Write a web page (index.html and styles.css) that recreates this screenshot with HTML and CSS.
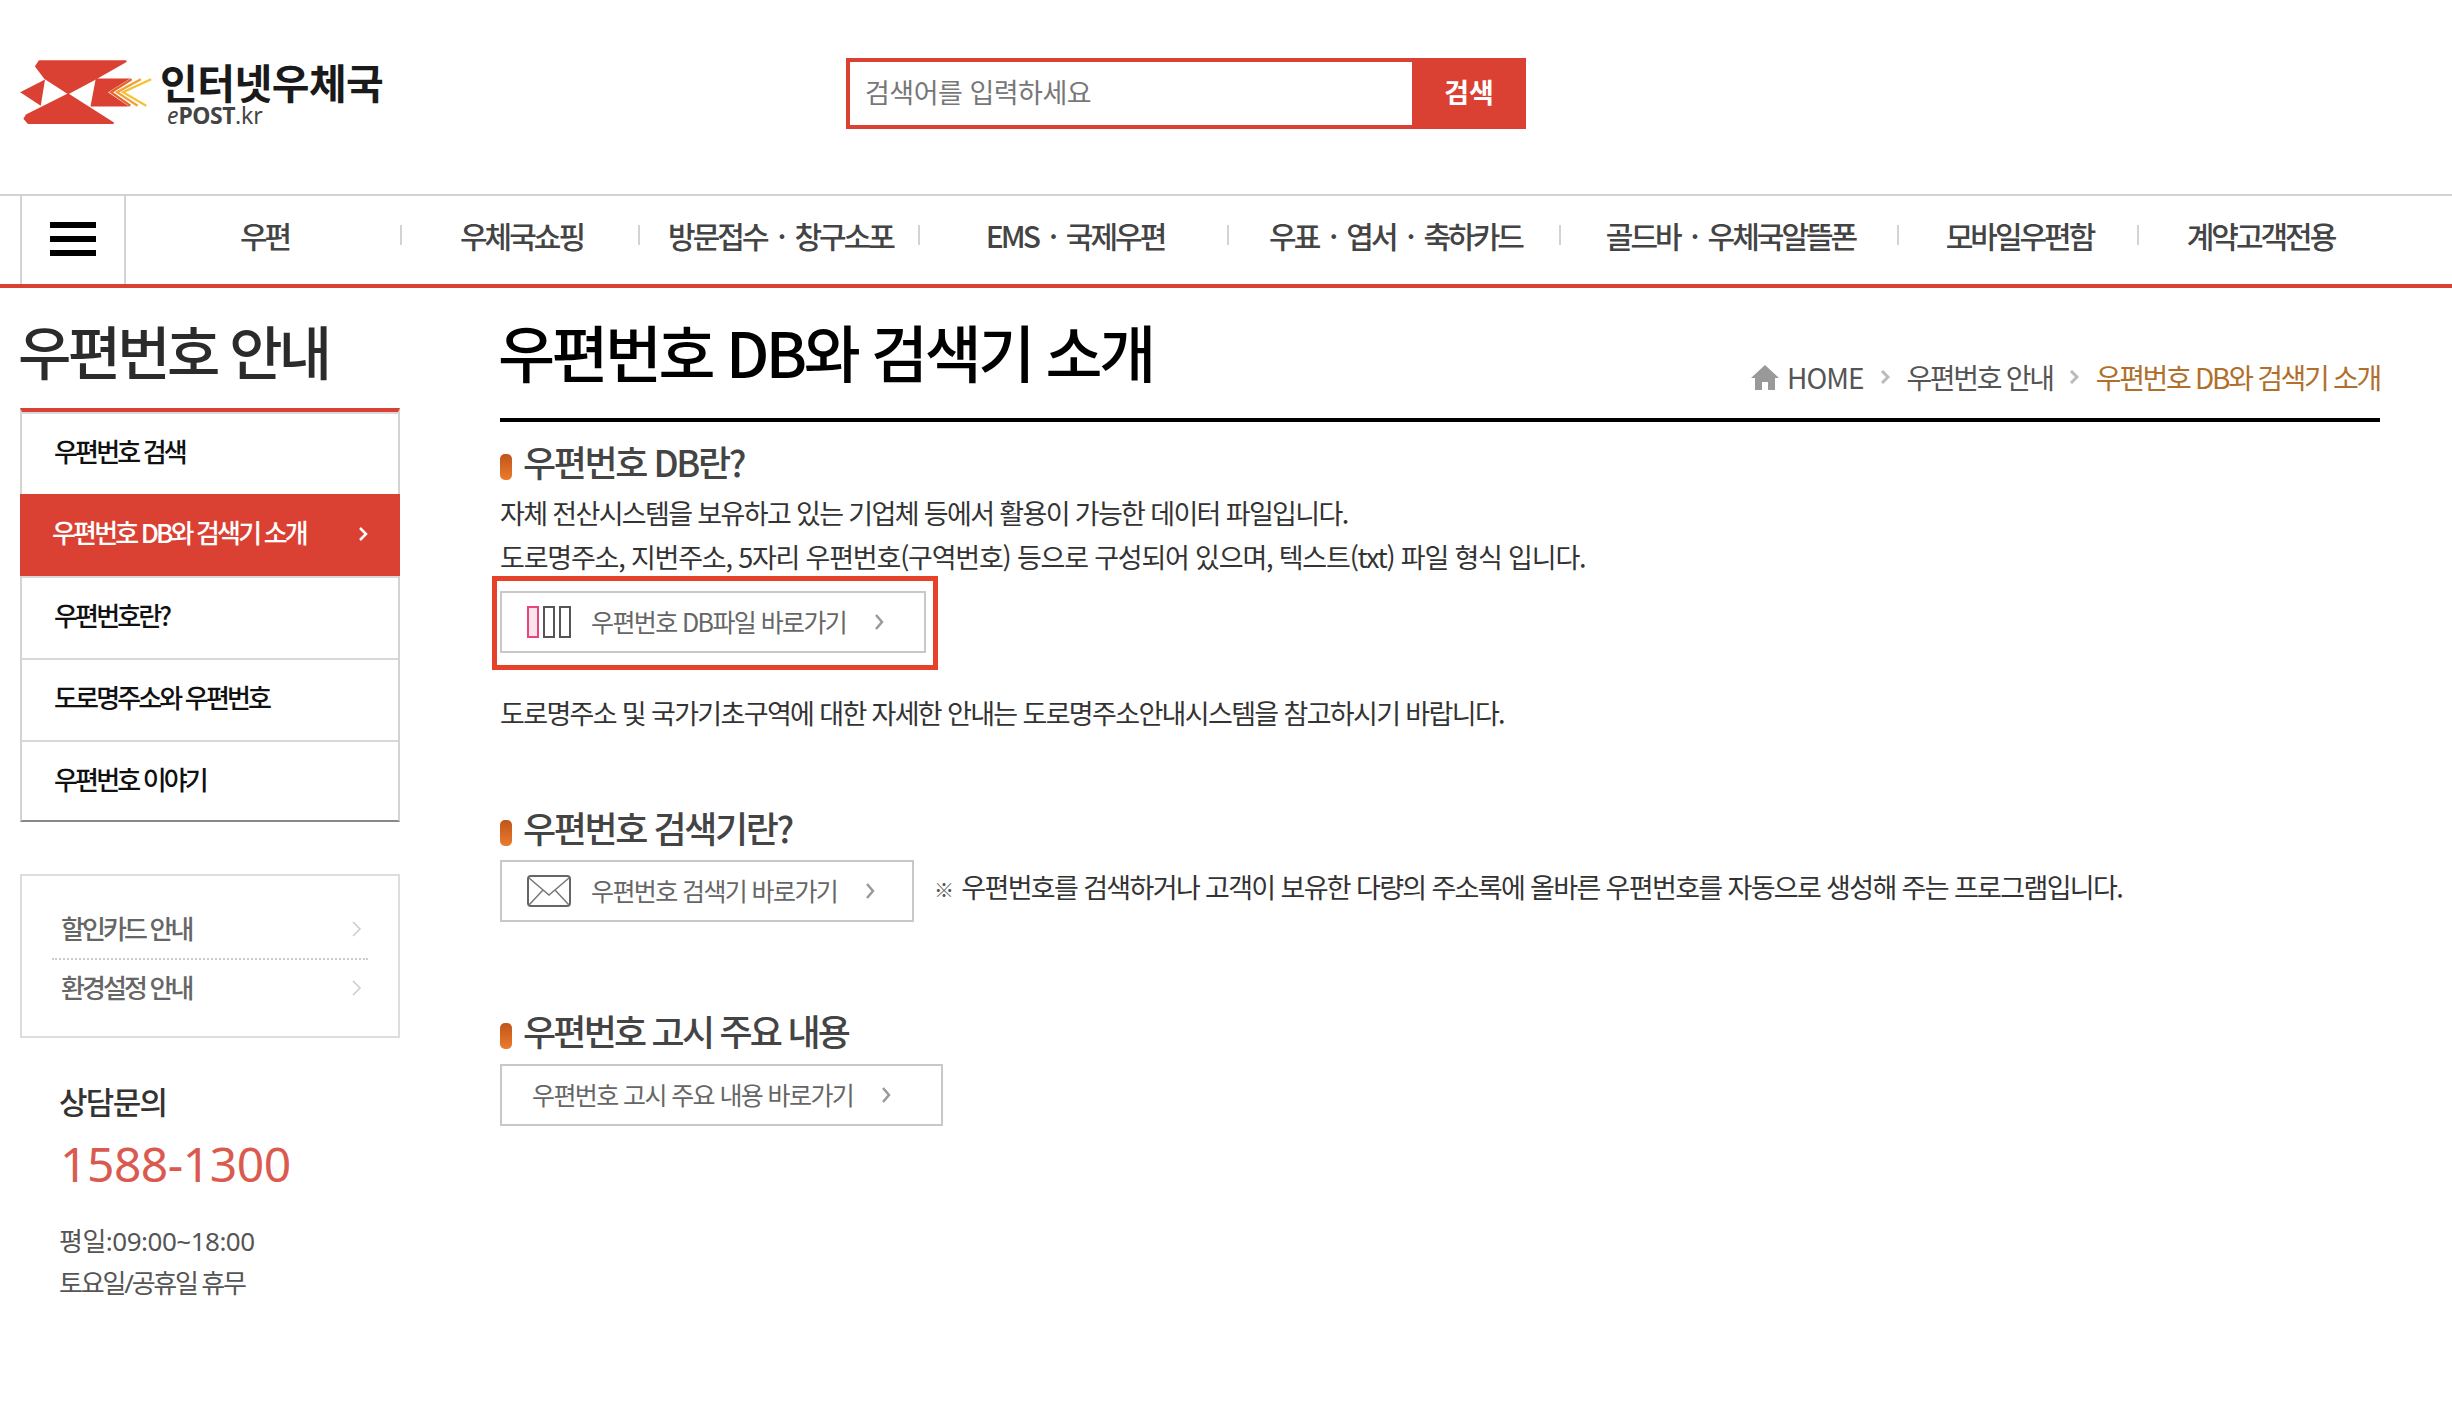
FILE: index.html
```html
<!DOCTYPE html>
<html lang="ko">
<head>
    <meta charset="UTF-8">
    <title>우편번호 DB와 검색기 소개</title>
    <link rel="stylesheet" href="styles.css">
</head>
<body>
    <header class="top">
        <a class="logo">
            <svg class="logo-mark" width="133" height="65" viewBox="60 88 400 196">
                <path fill="#db4133" stroke="#db4133" stroke-width="6" stroke-linejoin="round" d="M118 92 H378 L280 148 L205 188 L135 143 L108 107 Z"/>
                <path fill="#db4133" d="M60 185 L135 147 L122 226 Z"/>
                <path fill="#db4133" d="M288 144 H392 L325 185 L388 228 H272 Z"/>
                <path fill="#db4133" stroke="#db4133" stroke-width="6" stroke-linejoin="round" d="M205 192 L340 278 H85 L73 265 L80 254 Z"/>
                <path fill="none" stroke="#e8622c" stroke-width="7" d="M396 146 L334 185 L392 226"/>
                <path fill="none" stroke="#f0a23a" stroke-width="7" d="M424 146 L352 185 L414 226"/>
                <path fill="none" stroke="#f6c233" stroke-width="7" d="M455 146 L370 185 L440 226"/>
            </svg>
            <span class="logo-text">
                <span class="logo-name">인터넷우체국</span>
                <span class="logo-sub"><i>e</i><b>POST</b>.kr</span>
            </span>
        </a>
        <form class="search">
            <input class="search-input" type="text" placeholder="검색어를 입력하세요">
            <button class="search-btn" type="button">검색</button>
        </form>
    </header>

    <nav class="gnb">
        <div class="burger"><span></span><span></span><span></span></div>
        <ul class="gnb-list">
            <li style="width:276px">우편</li>
            <li style="width:238px">우체국쇼핑</li>
            <li style="width:280px">방문접수<span class="dot">·</span>창구소포</li>
            <li style="width:309px">EMS<span class="dot">·</span>국제우편</li>
            <li style="width:332px">우표<span class="dot">·</span>엽서<span class="dot">·</span>축하카드</li>
            <li style="width:338px">골드바<span class="dot">·</span>우체국알뜰폰</li>
            <li style="width:240px">모바일우편함</li>
            <li class="last" style="width:240px">계약고객전용</li>
        </ul>
    </nav>

    <div class="wrap">
        <aside class="side">
            <h2 class="side-title">우편번호 안내</h2>
            <ul class="side-menu">
                <li>우편번호 검색</li>
                <li class="on">우편번호 DB와 검색기 소개
                    <svg width="10" height="16" viewBox="0 0 10 16"><path d="M2 2 L8 8 L2 14" fill="none" stroke="#fff" stroke-width="2.5"/></svg>
                </li>
                <li>우편번호란?</li>
                <li>도로명주소와 우편번호</li>
                <li>우편번호 이야기</li>
            </ul>
            <ul class="side-links">
                <li>할인카드 안내
                    <svg width="10" height="16" viewBox="0 0 10 16"><path d="M1 1 L8 8 L1 15" fill="none" stroke="#ccc" stroke-width="1.5"/></svg>
                </li>
                <li>환경설정 안내
                    <svg width="10" height="16" viewBox="0 0 10 16"><path d="M1 1 L8 8 L1 15" fill="none" stroke="#ccc" stroke-width="1.5"/></svg>
                </li>
            </ul>
            <div class="call">
                <p class="call-label">상담문의</p>
                <p class="call-num">1588-1300</p>
                <p class="call-time">평일:09:00~18:00</p>
                <p class="call-time call-off">토요일/공휴일 휴무</p>
            </div>
        </aside>

        <main class="content">
            <div class="page-head">
                <h1 class="page-title">우편번호 DB와 검색기 소개</h1>
                <div class="crumbs">
                    <svg class="home" width="28" height="26" viewBox="0 0 28 26"><path fill="#999" d="M14 1 L28 14 H24 V26 H17 V18 H11 V26 H4 V14 H0 Z"/></svg>
                    <span class="crumb-home">HOME</span>
                    <svg class="sep" width="10" height="14" viewBox="0 0 10 14"><path d="M2 1 L8 7 L2 13" fill="none" stroke="#bbb" stroke-width="3"/></svg>
                    <span>우편번호 안내</span>
                    <svg class="sep" width="10" height="14" viewBox="0 0 10 14"><path d="M2 1 L8 7 L2 13" fill="none" stroke="#bbb" stroke-width="3"/></svg>
                    <span class="crumb-now">우편번호 DB와 검색기 소개</span>
                </div>
            </div>

            <section class="sec sec-db">
                <h3 class="sec-title">우편번호 DB란?</h3>
                <p class="txt">자체 전산시스템을 보유하고 있는 기업체 등에서 활용이 가능한 데이터 파일입니다.</p>
                <p class="txt txt-wide">도로명주소, 지번주소, 5자리 우편번호(구역번호) 등으로 구성되어 있으며, 텍스트(txt) 파일 형식 입니다.</p>
                <div class="mark">
                    <a class="link-btn btn-db">
                        <svg class="btn-ico" width="44" height="32" viewBox="0 0 44 32">
                            <rect x="1" y="1" width="10" height="30" fill="#fce4ec" stroke="#e8457a" stroke-width="2"/>
                            <rect x="17" y="1" width="10" height="30" fill="#fff" stroke="#555" stroke-width="2"/>
                            <rect x="33" y="1" width="10" height="30" fill="#fff" stroke="#555" stroke-width="2"/>
                        </svg>
                        <span class="btn-label">우편번호 DB파일 바로가기</span>
                        <svg class="chev" width="10" height="16" viewBox="0 0 10 16"><path d="M2 1 L8 8 L2 15" fill="none" stroke="#999" stroke-width="2.5"/></svg>
                    </a>
                </div>
                <p class="txt txt-after">도로명주소 및 국가기초구역에 대한 자세한 안내는 도로명주소안내시스템을 참고하시기 바랍니다.</p>
            </section>

            <section class="sec sec-finder">
                <h3 class="sec-title">우편번호 검색기란?</h3>
                <div class="btn-row">
                    <a class="link-btn btn-finder">
                        <svg class="btn-ico" width="44" height="32" viewBox="0 0 44 32">
                            <rect x="1" y="1" width="42" height="30" rx="3" fill="#fff" stroke="#666" stroke-width="2"/>
                            <path d="M2 3 L22 20 L42 3 M2 30 L16 15 M42 30 L28 15" fill="none" stroke="#777" stroke-width="1.5"/>
                        </svg>
                        <span class="btn-label">우편번호 검색기 바로가기</span>
                        <svg class="chev" width="10" height="16" viewBox="0 0 10 16"><path d="M2 1 L8 8 L2 15" fill="none" stroke="#999" stroke-width="2.5"/></svg>
                    </a>
                    <p class="txt note"><span class="note-mark">※</span> 우편번호를 검색하거나 고객이 보유한 다량의 주소록에 올바른 우편번호를 자동으로 생성해 주는 프로그램입니다.</p>
                </div>
            </section>

            <section class="sec sec-notice">
                <h3 class="sec-title">우편번호 고시 주요 내용</h3>
                <a class="link-btn btn-notice">
                    <span class="btn-label">우편번호 고시 주요 내용 바로가기</span>
                    <svg class="chev" width="10" height="16" viewBox="0 0 10 16"><path d="M2 1 L8 8 L2 15" fill="none" stroke="#999" stroke-width="2.5"/></svg>
                </a>
            </section>
        </main>
    </div>
</body>
</html>
```

FILE: styles.css
```css
* {
    box-sizing: border-box;
}
html, body {
    margin: 0;
    padding: 0;
    background: #fff;
}
body {
    font-family: "Noto Sans CJK KR", "Noto Sans", sans-serif;
    color: #333;
    height: 1426px;
    overflow: hidden;
}
ul, p, h1, h2, h3 {
    margin: 0;
    padding: 0;
    list-style: none;
}

/* top */
.top {
    height: 194px;
    display: flex;
    padding: 58px 0 0 20px;
}
.logo {
    display: flex;
    width: 826px;
}
.logo-mark {
    margin-top: 2px;
    flex: none;
}
.logo-text {
    display: flex;
    flex-direction: column;
    margin-left: 7px;
}
.logo-name {
    font-size: 41px;
    font-weight: 700;
    line-height: 46px;
    color: #1a1a1a;
    letter-spacing: -0.5px;
}
.logo-sub {
    font-family: "Noto Sans", sans-serif;
    font-size: 23px;
    line-height: 22px;
    margin: 0 0 0 7px;
    color: #444;
}
.logo-sub b {
    letter-spacing: -0.5px;
}
.search {
    display: flex;
    width: 680px;
    height: 71px;
}
.search-input {
    flex: 1;
    min-width: 0;
    border: 4px solid #db4133;
    border-right: 0;
    padding: 0 15px 4px;
    font: 27px "Noto Sans CJK KR", sans-serif;
    letter-spacing: -0.5px;
    color: #666;
    outline: none;
}
.search-input::placeholder {
    color: #777;
}
.search-btn {
    width: 114px;
    border: 0;
    padding: 0 0 4px;
    background: #db4133;
    color: #fff;
    font: 700 27px "Noto Sans CJK KR", sans-serif;
}

/* gnb */
.gnb {
    height: 94px;
    border-top: 2px solid #d3d3d3;
    border-bottom: 4px solid #db4133;
    display: flex;
}
.burger {
    width: 106px;
    margin-left: 20px;
    border-left: 2px solid #d3d3d3;
    border-right: 2px solid #d3d3d3;
    display: flex;
    flex-direction: column;
    justify-content: center;
    gap: 8px;
    padding: 0 0 3px 28px;
}
.burger span {
    display: block;
    width: 46px;
    height: 6px;
    background: #000;
}
.gnb-list {
    display: flex;
    align-items: center;
    height: 84px;
}
.gnb-list li {
    height: 20px;
    display: flex;
    align-items: center;
    justify-content: center;
    padding-left: 3px;
    border-right: 2px solid #d3d3d3;
    font-size: 30px;
    font-weight: 500;
    letter-spacing: -3px;
    color: #444;
    white-space: nowrap;
    position: relative;
    top: -3px;
}
.gnb-list li.last {
    border-right: 0;
}
.dot {
    margin: 0 11px;
}

/* layout */
.wrap {
    display: flex;
    padding-left: 20px;
}
.side {
    width: 380px;
    flex: none;
}
.content {
    width: 1880px;
    margin-left: 100px;
    flex: none;
}

/* side */
.side-title {
    font-size: 58px;
    font-weight: 500;
    letter-spacing: -3.7px;
    line-height: 62px;
    height: 120px;
    padding-top: 31px;
    color: #2b2b2b;
    white-space: nowrap;
    margin-left: -2px;
}
.side-menu {
    border-top: 4px solid #db4133;
    border-left: 2px solid #d3d3d3;
    border-right: 2px solid #d3d3d3;
    border-bottom: 2px solid #888;
}
.side-menu li {
    height: 82px;
    display: flex;
    align-items: center;
    justify-content: space-between;
    padding: 0 36px 8px 32px;
    border-top: 2px solid #d8d8d8;
    font-size: 26px;
    letter-spacing: -2.85px;
    color: #111;
    font-weight: 500;
}
.side-menu li:last-child {
    height: 80px;
    padding-bottom: 6px;
}
.side-menu li.on {
    margin: 0 -2px;
    padding-left: 32px;
    padding-right: 32px;
    background: #db4133;
    border-top: 0;
    color: #fff;
}
.side-menu li.on svg {
    margin-top: 6px;
}
.side-links {
    margin-top: 52px;
    height: 164px;
    border: 2px solid #ddd;
    padding: 24px 30px 0;
}
.side-links li {
    height: 60px;
    display: flex;
    align-items: center;
    justify-content: space-between;
    padding: 0 6px 3px 9px;
    font-size: 26px;
    font-weight: 500;
    letter-spacing: -2.9px;
    color: #666;
}
.side-links li svg {
    margin-top: 3px;
}
.side-links li:first-child {
    border-bottom: 2px dotted #ccc;
}
.side-links li:last-child {
    height: 56px;
}
.call {
    padding: 41px 0 0 40px;
}
.call-label {
    font-size: 31px;
    font-weight: 500;
    line-height: 44px;
    letter-spacing: -1.7px;
    color: #333;
    margin-left: -1px;
}
.call-num {
    font-family: "Noto Sans", sans-serif;
    font-size: 48px;
    line-height: 60px;
    margin-top: 11px;
    letter-spacing: -0.5px;
    color: #da5a50;
    margin-bottom: 26px;
}
.call-time {
    font-family: "Noto Sans", "Noto Sans CJK KR", sans-serif;
    font-size: 26px;
    line-height: 42px;
    letter-spacing: -0.5px;
    color: #555;
    margin-left: -1px;
}
.call-off {
    letter-spacing: -2.2px;
}

/* content */
.page-head {
    height: 134px;
    border-bottom: 4px solid #000;
    display: flex;
    justify-content: space-between;
    padding-top: 28px;
}
.page-title {
    font-size: 62px;
    font-weight: 500;
    line-height: 70px;
    letter-spacing: -3.5px;
    color: #000;
    white-space: nowrap;
    margin-left: -2px;
}
.crumbs {
    display: flex;
    align-items: center;
    height: 44px;
    margin-top: 39px;
    gap: 16.5px;
    font-size: 28px;
    letter-spacing: -2.3px;
    color: #555;
}
.crumb-home {
    letter-spacing: -1px;
}
.home {
    margin-right: -8.5px;
}
.crumb-now {
    color: #b0702b;
}

.sec-title {
    font-size: 36px;
    font-weight: 500;
    line-height: 48px;
    letter-spacing: -2.4px;
    color: #444;
    padding-left: 23px;
    position: relative;
}
.sec-title::before {
    content: "";
    position: absolute;
    left: 0;
    top: 17px;
    width: 12px;
    height: 26px;
    border-radius: 5px;
    background: linear-gradient(#bf5519, #ec7b2e);
}
.sec-db {
    padding-top: 15px;
}
.sec-db .sec-title {
    margin-bottom: 6px;
}
.txt {
    font-size: 27px;
    line-height: 44px;
    letter-spacing: -1.65px;
    color: #333;
    white-space: nowrap;
}
.txt-wide {
    letter-spacing: -1.2px;
}
.mark {
    width: 446px;
    height: 94px;
    margin: -3px 0 0 -8px;
    border: 5px solid #e8412a;
    padding: 10px 0 0 3px;
}
.link-btn {
    display: flex;
    align-items: center;
    height: 62px;
    border: 2px solid #c8c8c8;
    font-size: 25px;
    letter-spacing: -1.6px;
    color: #666;
    flex: none;
    white-space: nowrap;
}
.btn-label {
    padding-bottom: 3px;
}
.btn-ico {
    margin: 0 20px 0 25px;
    flex: none;
}
.chev {
    margin-left: 28px;
}
.btn-db {
    width: 426px;
}
.txt-after {
    margin-top: 21px;
}
.sec-finder {
    padding-top: 68px;
}
.sec-finder .sec-title {
    margin-bottom: 9px;
}
.btn-row {
    display: flex;
    align-items: center;
    gap: 20px;
}
.btn-finder {
    width: 414px;
}
.note {
    position: relative;
    top: -3px;
}
.note-mark {
    font-size: 20px;
    color: #555;
    margin-right: 3px;
}
.sec-notice {
    padding-top: 84px;
}
.sec-notice .sec-title {
    margin-bottom: 10px;
    letter-spacing: -2.8px;
}
.btn-notice {
    width: 443px;
    padding-left: 30px;
}
```
